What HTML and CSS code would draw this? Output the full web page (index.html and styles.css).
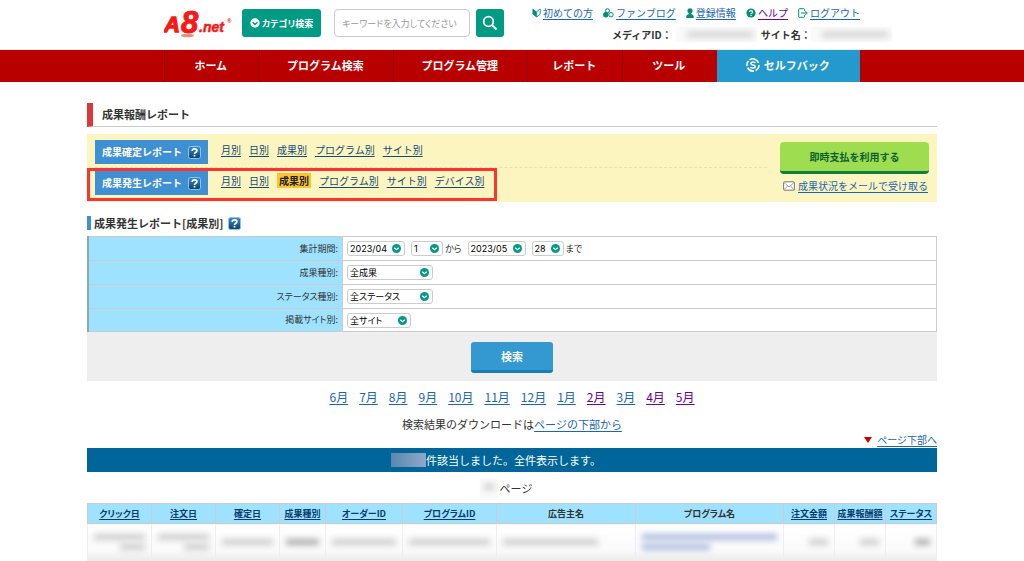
FILE: index.html
```html
<!DOCTYPE html>
<html lang="ja">
<head>
<meta charset="utf-8">
<title>成果報酬レポート</title>
<link rel="stylesheet" href="styles.css">
</head>
<body>
<svg class="defs" width="0" height="0" aria-hidden="true">
  <defs>
    <linearGradient id="help-fill" x1="0" y1="0" x2="0" y2="1"><stop offset="0" stop-color="#3d8fc4"/><stop offset="1" stop-color="#0a3f6b"/></linearGradient>
    <symbol id="help" viewBox="0 0 13 13">
      <rect x=".5" y=".5" width="12" height="12" rx="2" fill="url(#help-fill)" stroke="#8cc6ee"/>
      <path d="M4.2 5C4.2 3.4 5.2 2.8 6.5 2.8S8.9 3.5 8.9 4.8C8.9 6.3 6.5 6.3 6.5 8" fill="none" stroke="#fff" stroke-width="1.7"/>
      <rect x="5.6" y="8.9" width="1.8" height="1.6" fill="#fff"/>
    </symbol>
  </defs>
</svg>

<header class="site-header">
  <div class="header-inner">
    <a class="logo" href="#" aria-label="A8.net">
      <svg width="70" height="34" viewBox="0 0 70 34">
        <ellipse cx="23.500" cy="30.500" rx="6.500" ry="1.800" fill="#f08a80"/>
        <g fill="#f81818" stroke="#f81818" font-family="Liberation Sans, sans-serif" font-weight="bold" font-style="italic">
          <text x="0" y="27" font-size="22" stroke-width="1.400">A</text>
          <text x="17" y="28" font-size="31" stroke-width="1">8</text>
          <text x="35" y="27" font-size="14" stroke-width=".5">.net</text>
          <text x="63" y="18" font-size="6" stroke="none">®</text>
        </g>
      </svg>
    </a>
    <button class="category" type="button">
      <svg width="10" height="10" viewBox="0 0 10 10"><circle cx="5" cy="5" r="4.700" fill="#fff"/><path d="M2.600 4.200L5 6.400L7.400 4.200" fill="none" stroke="#009b85" stroke-width="1.500"/></svg>
      カテゴリ検索
    </button>
    <form class="search">
      <input type="text" placeholder="キーワードを入力してください" aria-label="キーワード">
      <button type="button" aria-label="検索">
        <svg width="16" height="16" viewBox="0 0 16 16"><circle cx="6.500" cy="6.500" r="4.800" fill="none" stroke="#fff" stroke-width="1.800"/><path d="M10 10L14.500 14.500" stroke="#fff" stroke-width="2"/></svg>
      </button>
    </form>
    <div class="account">
      <ul class="utility">
        <li><svg width="9" height="10" viewBox="0 0 9 10"><path d="M.5 .5L4.500 3.500V9.500L.5 6z" fill="#008f76"/><path d="M8.200 1L4.700 3.700V9L8.200 6z" fill="#fff" stroke="#008f76" stroke-width=".9"/></svg><a href="#">初めての方</a></li>
        <li><svg width="11" height="10" viewBox="0 0 11 10"><circle cx="4.500" cy="2.700" r="2" fill="#fff" stroke="#008f76"/><circle cx="2.800" cy="6.800" r="2.700" fill="#008f76"/><circle cx="8" cy="6.700" r="2.200" fill="#fff" stroke="#008f76"/></svg><a href="#">ファンブログ</a></li>
        <li><svg width="8" height="10" viewBox="0 0 8 10"><circle cx="4" cy="2.800" r="2.600" fill="#008f76"/><path d="M.3 10V8.200Q.3 6.500 2.500 6.200L3 5H5L5.500 6.200Q7.700 6.500 7.700 8.200V10z" fill="#008f76"/></svg><a href="#">登録情報</a></li>
        <li><svg width="10" height="10" viewBox="0 0 10 10"><circle cx="5" cy="5" r="4.600" fill="#008f76"/><path d="M3.400 4Q3.400 2.600 5 2.600T6.600 4Q6.600 5 5 5.800V6.200" fill="none" stroke="#fff" stroke-width="1.200"/><rect x="4.400" y="6.900" width="1.200" height="1.100" fill="#fff"/></svg><a class="visited" href="#">ヘルプ</a></li>
        <li><svg width="10" height="10" viewBox="0 0 10 10"><path d="M6.500 2.800V1.500Q6.500 .7 5.700 .7H1.500Q.7 .7 .7 1.500V8.500Q.7 9.300 1.500 9.300H5.700Q6.500 9.300 6.500 8.500V7.200M3 5H9M7.300 3L9.300 5L7.300 7" fill="none" stroke="#008f76"/></svg><a href="#">ログアウト</a></li>
      </ul>
      <div class="media"><span>メディアID：</span><span class="masked"><i></i></span><span>サイト名：</span><span class="masked"><i></i></span></div>
    </div>
  </div>
</header>

<nav class="global-nav">
  <ul>
    <li class="short"><a href="#">ホーム</a></li>
    <li class="long"><a href="#">プログラム検索</a></li>
    <li class="long"><a href="#">プログラム管理</a></li>
    <li class="short"><a href="#">レポート</a></li>
    <li class="short"><a href="#">ツール</a></li>
    <li class="selfback"><a href="#"><svg width="14" height="14" viewBox="0 0 14 14"><path d="M3.500 1.900A6 6 0 0 1 12.600 5M13 7A6 6 0 0 1 9.500 12.500M8 13A6 6 0 0 1 1.600 9.700M1 8A6 6 0 0 1 2.500 3" fill="none" stroke="#fff" stroke-width="1.600"/><path d="M9.300 5Q9 3.900 7 3.900T4.800 5.400Q4.800 6.600 7 6.900T9.300 8.600Q9.300 10.100 7 10.100T4.600 9" fill="none" stroke="#fff" stroke-width="1.500"/></svg>セルフバック</a></li>
  </ul>
</nav>

<main class="content">
  <h1 class="page-title">成果報酬レポート</h1>

  <section class="report-menu">
    <div class="report-rows">
      <div class="report-row">
        <div class="report-label">成果確定レポート <svg width="13" height="13"><use href="#help"/></svg></div>
        <ul><li><a href="#">月別</a></li><li><a href="#">日別</a></li><li><a href="#">成果別</a></li><li><a href="#">プログラム別</a></li><li><a href="#">サイト別</a></li></ul>
      </div>
      <div class="report-row marked">
        <div class="report-label">成果発生レポート <svg width="13" height="13"><use href="#help"/></svg></div>
        <ul><li><a href="#">月別</a></li><li><a href="#">日別</a></li><li><a class="current" href="#">成果別</a></li><li><a href="#">プログラム別</a></li><li><a href="#">サイト別</a></li><li><a href="#">デバイス別</a></li></ul>
      </div>
    </div>
    <div class="report-actions">
      <button type="button">即時支払を利用する</button>
      <a href="#"><svg width="12" height="10" viewBox="0 0 12 10"><rect x=".6" y=".8" width="10.800" height="8.400" rx="1" fill="#fff" stroke="#777"/><path d="M1 1.500L6 6L11 1.500M1 8.800L4.500 5M11 8.800L7.500 5" fill="none" stroke="#888" stroke-width=".8"/></svg><span>成果状況をメールで受け取る</span></a>
    </div>
  </section>

  <h2 class="sub-title">成果発生レポート[成果別] <svg width="13" height="13"><use href="#help"/></svg></h2>

  <form>
    <table class="conditions">
      <tr><th scope="row">集計期間:</th><td><div class="fields">
        <select class="month" aria-label="開始年月"><option>2023/04</option></select>
        <select class="day" aria-label="開始日"><option>1</option></select><span>から</span>
        <select class="month" aria-label="終了年月"><option>2023/05</option></select>
        <select class="day" aria-label="終了日"><option>28</option></select><span>まで</span></div></td></tr>
      <tr><th scope="row"><label for="kind">成果種別:</label></th><td><div class="fields"><select class="wide" id="kind"><option>全成果</option></select></div></td></tr>
      <tr><th scope="row"><label for="status">ステータス種別:</label></th><td><div class="fields"><select class="wide" id="status"><option>全ステータス</option></select></div></td></tr>
      <tr><th scope="row"><label for="site">掲載サイト別:</label></th><td><div class="fields"><select class="site" id="site"><option>全サイト</option></select></div></td></tr>
    </table>
    <div class="submit"><button type="button">検索</button></div>
  </form>

  <ul class="months">
    <li><a href="#">6月</a></li><li><a href="#">7月</a></li><li><a href="#">8月</a></li><li><a href="#">9月</a></li><li><a href="#">10月</a></li><li><a href="#">11月</a></li><li><a href="#">12月</a></li><li><a href="#">1月</a></li><li><a class="visited" href="#">2月</a></li><li><a href="#">3月</a></li><li><a class="visited" href="#">4月</a></li><li><a class="visited" href="#">5月</a></li>
  </ul>
  <p class="download">検索結果のダウンロードは<a href="#">ページの下部から</a></p>
  <p class="to-bottom"><svg width="8" height="6" viewBox="0 0 8 6"><path d="M0 0H8L4 6z" fill="#c00"/></svg><a href="#">ページ下部へ</a></p>
  <p class="result-count"><span class="masked"></span>件該当しました。全件表示します。</p>
  <p class="pager"><span class="masked"><i></i></span>ページ</p>

  <table class="results">
    <colgroup><col class="date"><col class="date"><col class="date"><col class="kind"><col class="order"><col class="program-id"><col class="advertiser"><col class="program"><col class="amount"><col class="amount"><col class="amount"></colgroup>
    <thead>
      <tr><th><a href="#">クリック日</a></th><th><a href="#">注文日</a></th><th><a href="#">確定日</a></th><th><a href="#">成果種別</a></th><th><a href="#">オーダーID</a></th><th><a href="#">プログラムID</a></th><th>広告主名</th><th>プログラム名</th><th><a href="#">注文金額</a></th><th><a href="#">成果報酬額</a></th><th><a href="#">ステータス</a></th></tr>
    </thead>
    <tbody>
      <tr>
        <td><i class="full"></i><i class="half end"></i></td>
        <td><i class="full"></i><i class="half end"></i></td>
        <td><i class="full"></i></td>
        <td><i class="full dark"></i></td>
        <td><i class="full"></i></td>
        <td><i class="full"></i></td>
        <td><i class="most"></i></td>
        <td><i class="full link"></i><i class="half link"></i></td>
        <td><i class="half end"></i></td>
        <td><i class="half end"></i></td>
        <td><i class="third end dark"></i></td>
      </tr>
    </tbody>
  </table>
</main>
</body>
</html>
```
FILE: styles.css
```css
*, *::after { box-sizing: border-box; }

body {
  margin: 0;
  background: #fff;
  color: #333;
  font: 10px/16px "Noto Sans CJK JP", sans-serif;
}

ul { display: flex; margin: 0; padding: 0; list-style: none; }
p { margin: 0; }
a { color: #1a66b3; text-underline-offset: 2px; }
a.visited { color: #660099; }
button, input, select { font-family: inherit; }
svg { flex: none; }
.defs { position: absolute; }

/* Header */
.site-header { border-bottom: 1px solid #eee; }
.header-inner {
  display: flex;
  align-items: flex-start;
  max-width: 696px;
  height: 49px;
  margin: 0 auto;
  padding-top: 5px;
}
.logo { width: 78px; }
.logo svg { display: block; }
.category {
  display: flex;
  align-items: center;
  justify-content: center;
  gap: 2px;
  width: 79px;
  height: 28px;
  margin-top: 4px;
  padding: 0;
  border: 0;
  border-radius: 3px;
  background: #009b85;
  color: #fff;
  font-size: 9px;
  font-weight: bold;
  font-feature-settings: "palt";
}
.search { display: flex; gap: 6px; margin: 4px 0 0 13px; }
.search input {
  width: 136px;
  height: 28px;
  padding: 0 7px;
  border: 1px solid #ccc;
  border-radius: 4px;
  font-size: 9px;
  font-feature-settings: "palt";
}
.search input::placeholder { color: #999; }
.search button {
  display: flex;
  align-items: center;
  justify-content: center;
  width: 28px;
  height: 28px;
  padding: 0;
  border: 0;
  border-radius: 3px;
  background: #009b85;
}
.account { flex: 1; min-width: 0; margin-left: 28px; }
.utility { justify-content: space-between; }
.utility li { display: flex; align-items: center; gap: 2px; white-space: nowrap; }
.media {
  display: flex;
  gap: 4px;
  margin: 6px 0 0 80px;
  font-weight: bold;
  white-space: nowrap;
}
.masked { display: inline-block; background: #fafafa; }
.masked i { display: block; background: #ccc; filter: blur(3px); }
.media .masked { flex: none; width: 81px; height: 15px; padding: 5px 4px 0 11px; }
.media .masked:last-child { margin-left: -4px; }
.media .masked i { height: 5px; }

/* Global navigation */
.global-nav { background: #b80000; }
.global-nav ul { max-width: 696px; margin: 0 auto; }
.global-nav li { flex: 94; border-left: 1px solid #960000; }
.global-nav .long { flex: 134; }
.global-nav .selfback { flex: 143; border-color: #2499cd; background: #2499cd; }
.global-nav a {
  display: flex;
  align-items: center;
  justify-content: center;
  gap: 4px;
  height: 32px;
  padding: 0 2px 2px 0;
  color: #fff;
  font-size: 11px;
  font-weight: bold;
  text-decoration: none;
}

/* Titles */
.content { max-width: 850px; margin: 21px auto 0; }
.page-title {
  height: 24px;
  margin: 0 0 7px;
  padding-left: 9px;
  border-left: 6px solid #dd3838;
  border-bottom: 1px solid #ccc;
  font-size: 11px;
  line-height: 23px;
}
.sub-title {
  display: flex;
  align-items: center;
  gap: 5px;
  height: 14px;
  margin: 14px 0 6px;
  padding-left: 3px;
  border-left: 4px solid #3f90d2;
  font-size: 11px;
}

/* Report menu */
.report-menu {
  display: flex;
  justify-content: space-between;
  padding: 0 8px;
  background: #fdf5c0;
}
.report-rows { flex: 1; max-width: 672px; }
.report-row { display: flex; gap: 13px; padding: 6px 0 3px; }
.report-row.marked { position: relative; padding: 3px 0 7px; border-top: 1px dashed #e6dfae; }
.report-row.marked::after {
  content: "";
  position: absolute;
  top: 0;
  left: -8px;
  width: 410px;
  height: 33px;
  border: 3px solid #fb3434;
  pointer-events: none;
}
.report-label {
  display: flex;
  align-items: center;
  justify-content: space-between;
  width: 113px;
  height: 24px;
  padding: 0 7px;
  background: #3f90d2;
  color: #fff;
  font-weight: bold;
}
.report-row ul { gap: 8px; padding-top: 2px; }
.report-row a { color: #124a78; }
.report-row .current { padding: 0 2px; background: #fcc430; color: #222; font-weight: bold; text-decoration: none; }
.report-actions { display: flex; flex-direction: column; gap: 4px; width: 149px; padding-top: 8px; }
.report-actions button {
  height: 32px;
  border: 0;
  border-bottom: 3px solid #108040;
  border-radius: 4px;
  background: #9edc50;
  color: #0c6030;
  font-size: 10px;
  font-weight: bold;
}
.report-actions a { display: flex; align-items: center; gap: 3px; padding-left: 3px; white-space: nowrap; text-decoration: none; }
.report-actions a span { text-decoration: underline; }

/* Search conditions */
.conditions { width: 100%; border-collapse: collapse; font-size: 9px; font-feature-settings: "palt"; }
.conditions th, .conditions td { height: 24px; padding: 0 4px; border: 1px solid #ccc; }
.conditions tr:last-child > * { height: 23px; }
.conditions th { width: 30%; border-left: 2px solid #8aaab4; background: #9ee2ff; font-weight: normal; text-align: right; }
.fields { display: flex; align-items: center; gap: 6px; }
.fields span { margin: 0 0 0 -4px; }
.fields select {
  height: 15px;
  padding: 0 2px;
  border: 1px solid #ccc;
  border-radius: 3px;
  appearance: none;
  background: #fff url("data:image/svg+xml,%3Csvg xmlns='http://www.w3.org/2000/svg' viewBox='0 0 9 9'%3E%3Ccircle cx='4.500' cy='4.500' r='4.500' fill='%23009b85'/%3E%3Cpath d='M2.300 3.800L4.500 5.700L6.700 3.800' fill='none' stroke='white' stroke-width='1.300'/%3E%3C/svg%3E") no-repeat right 3px center / 9px 9px;
  color: #000;
  font: 9px/13px Inter, "Noto Sans CJK JP", sans-serif;
  font-feature-settings: "palt";
}
.month { width: 58px; }
.day { width: 32px; }
.wide { width: 86px; }
.site { width: 64px; }
.submit { display: flex; justify-content: center; padding: 10px 0 8px; background: #eee; }
.submit button {
  width: 82px;
  height: 31px;
  border: 0;
  border-bottom: 3px solid #1a7db5;
  border-radius: 3px;
  background: #3399d0;
  color: #fff;
  font-size: 11px;
  font-weight: bold;
}

/* Result summary */
.months { justify-content: center; gap: 11px; margin-top: 8px; font-size: 12px; }
.download { margin-top: 11px; font-size: 11px; text-align: center; }
.to-bottom { display: flex; align-items: center; justify-content: flex-end; gap: 5px; }
.result-count {
  display: flex;
  align-items: center;
  justify-content: center;
  height: 24px;
  padding-right: 32px;
  background: #069;
  color: #fff;
  font-size: 11px;
}
.result-count .masked { width: 35px; height: 14px; background: linear-gradient(90deg, #5a87b0, #8fa8c8); }
.pager { display: flex; align-items: center; justify-content: center; gap: 2px; height: 31px; padding-right: 12px; font-size: 11px; }
.pager .masked { width: 18px; height: 20px; padding: 6px 4px; }
.pager .masked i { height: 6px; }

/* Results */
.results { width: 100%; table-layout: fixed; border-collapse: collapse; }
.results th {
  height: 20px;
  padding: 0;
  border: 1px solid #ccc;
  background: #9ee2ff;
  font-size: 9px;
  line-height: 18px;
  white-space: nowrap;
  font-feature-settings: "palt";
}
.results th a { color: #0b3c6e; }
.results td { height: 37px; padding: 3px 6px; border: 1px solid #eee; border-bottom: 0; background: linear-gradient(#fff, #fafafa 70%, #eaeaea); }
.results td i { display: block; height: 6px; margin: 4px 0; background: #ccc; filter: blur(3px); }
.results .full { width: 100%; }
.results .most { width: 75%; }
.results .half { width: 50%; }
.results .third { width: 40%; }
.results .end { margin-left: auto; }
.results .dark { background: #aaa; }
.results .link { background: #a9b8dc; }
.date { width: 64px; }
.results .kind { width: 46px; }
.order { width: 77px; }
.program-id { width: 94px; }
.advertiser { width: 139px; }
.program { width: 148px; }
.amount { width: 51px; }
```
